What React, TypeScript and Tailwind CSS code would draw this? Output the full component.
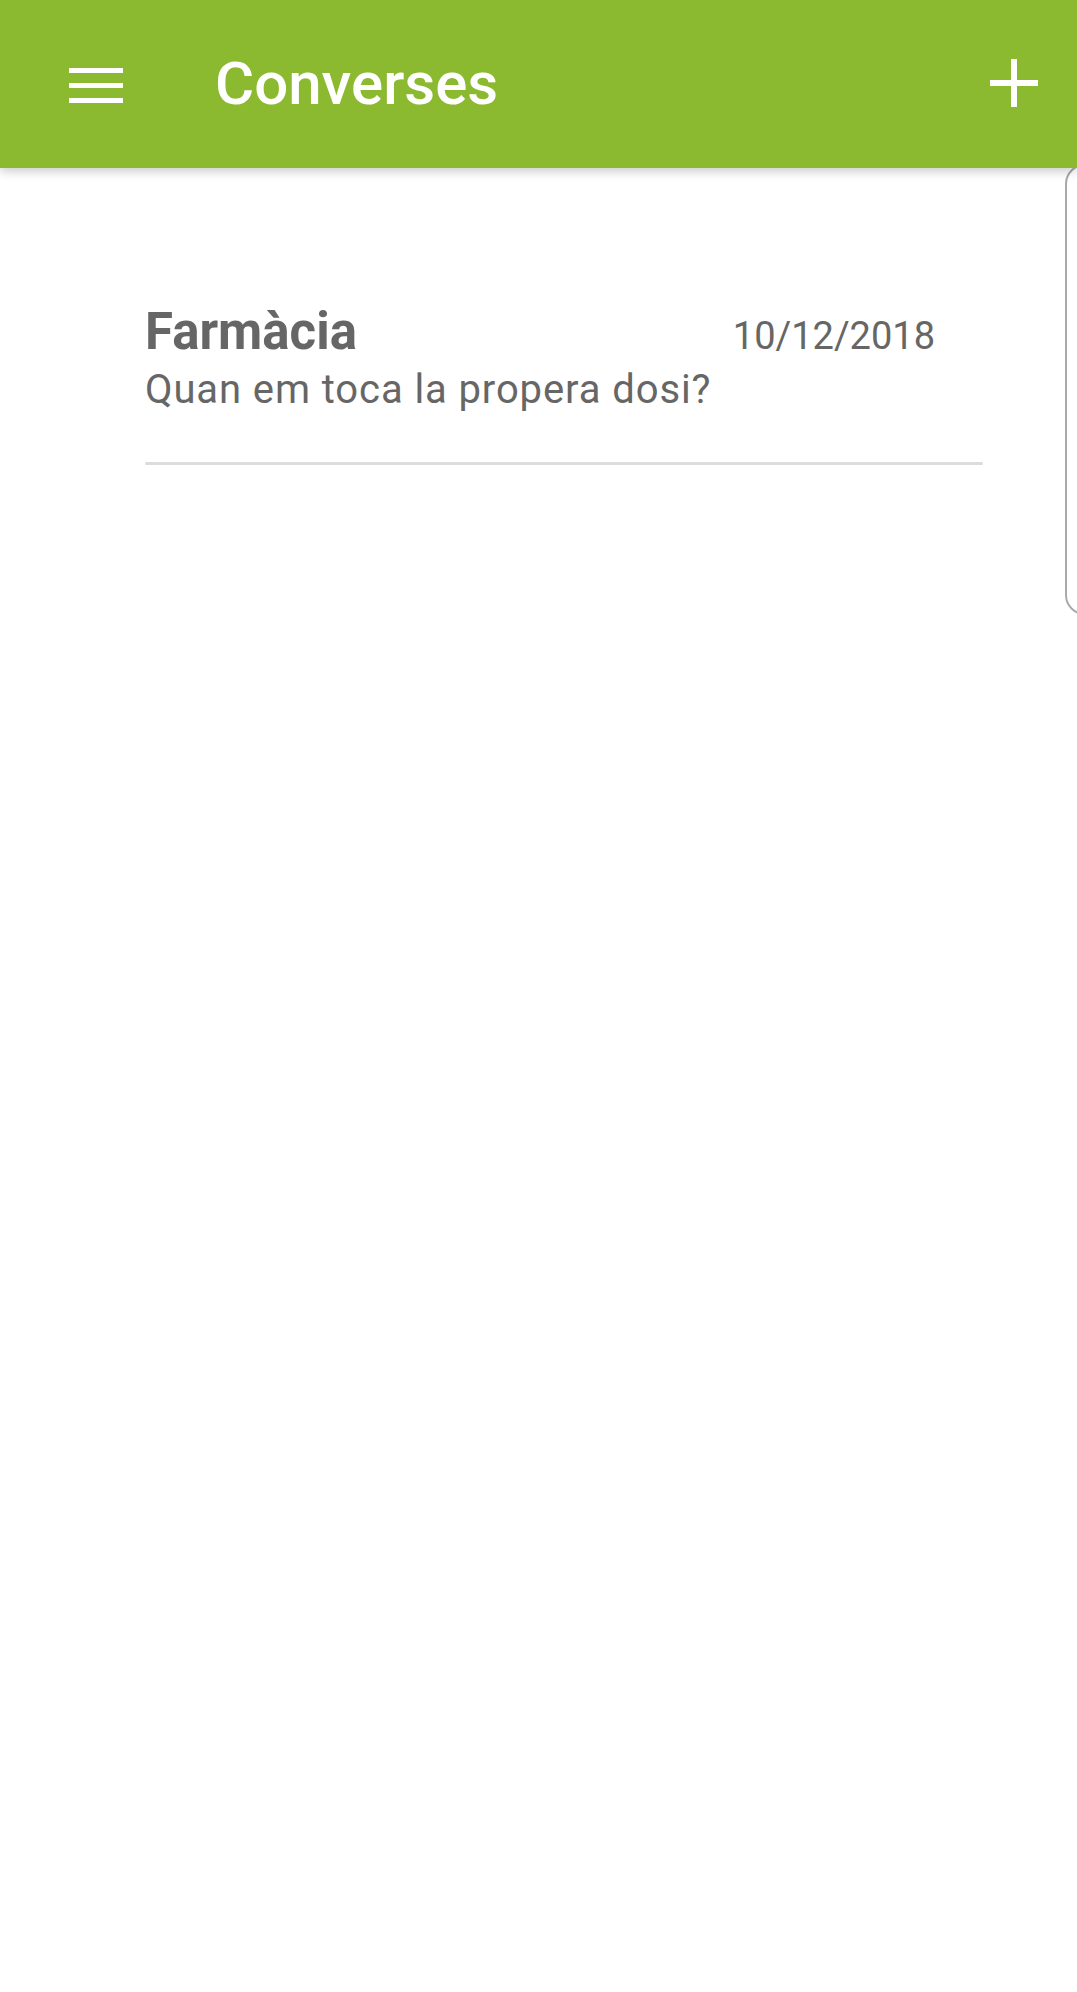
const conversations = [
  { name: 'Farmàcia', date: '10/12/2018', preview: 'Quan em toca la propera dosi?' },
];

function MenuIcon() {
  return (
    <svg width="54" height="36" viewBox="0 0 54 36" fill="#ffffff">
      <rect x="0" y="0" width="54" height="5" />
      <rect x="0" y="15" width="54" height="5" />
      <rect x="0" y="30" width="54" height="5" />
    </svg>
  );
}

function PlusIcon() {
  return (
    <svg width="48" height="48" viewBox="0 0 48 48" fill="#ffffff">
      <rect x="0" y="21" width="48" height="6" />
      <rect x="21" y="0" width="6" height="48" />
    </svg>
  );
}

export default function App() {
  return (
    <div className="relative min-h-[1992px] overflow-hidden bg-white font-['Roboto',sans-serif]">
      <header className="relative z-10 flex h-[168px] items-center bg-[#8bb92f] pl-[69px] pr-[39px] shadow-[0_3px_10px_rgba(0,0,0,0.22)]">
        <div className="mt-[3px] flex">
          <MenuIcon />
        </div>
        <h1 className="ml-[92px] text-[60px] font-medium text-white">Converses</h1>
        <button className="ml-auto -mt-[2px] flex">
          <PlusIcon />
        </button>
      </header>

      <main className="pl-[145px] pt-[134px]">
        {conversations.map((c) => (
          <div key={c.name} className="w-[838px]">
            <div className="flex items-baseline justify-between pr-[48px]">
              <span className="text-[51px] font-bold leading-[60px] text-[#666666]">{c.name}</span>
              <span className="text-[38px] leading-[60px] text-[#666666]">{c.date}</span>
            </div>
            <p className="text-[40px] leading-[48px] tracking-[0.9px] text-[#666666]">{c.preview}</p>
            <div className="mt-[48px] h-[3px] rounded-full bg-[#dcdcdc]" />
          </div>
        ))}
      </main>

      <div className="absolute left-[1065px] top-[164px] h-[451px] w-[40px] rounded-l-[20px] border-2 border-[#a9a9a9] bg-white" />
    </div>
  );
}
